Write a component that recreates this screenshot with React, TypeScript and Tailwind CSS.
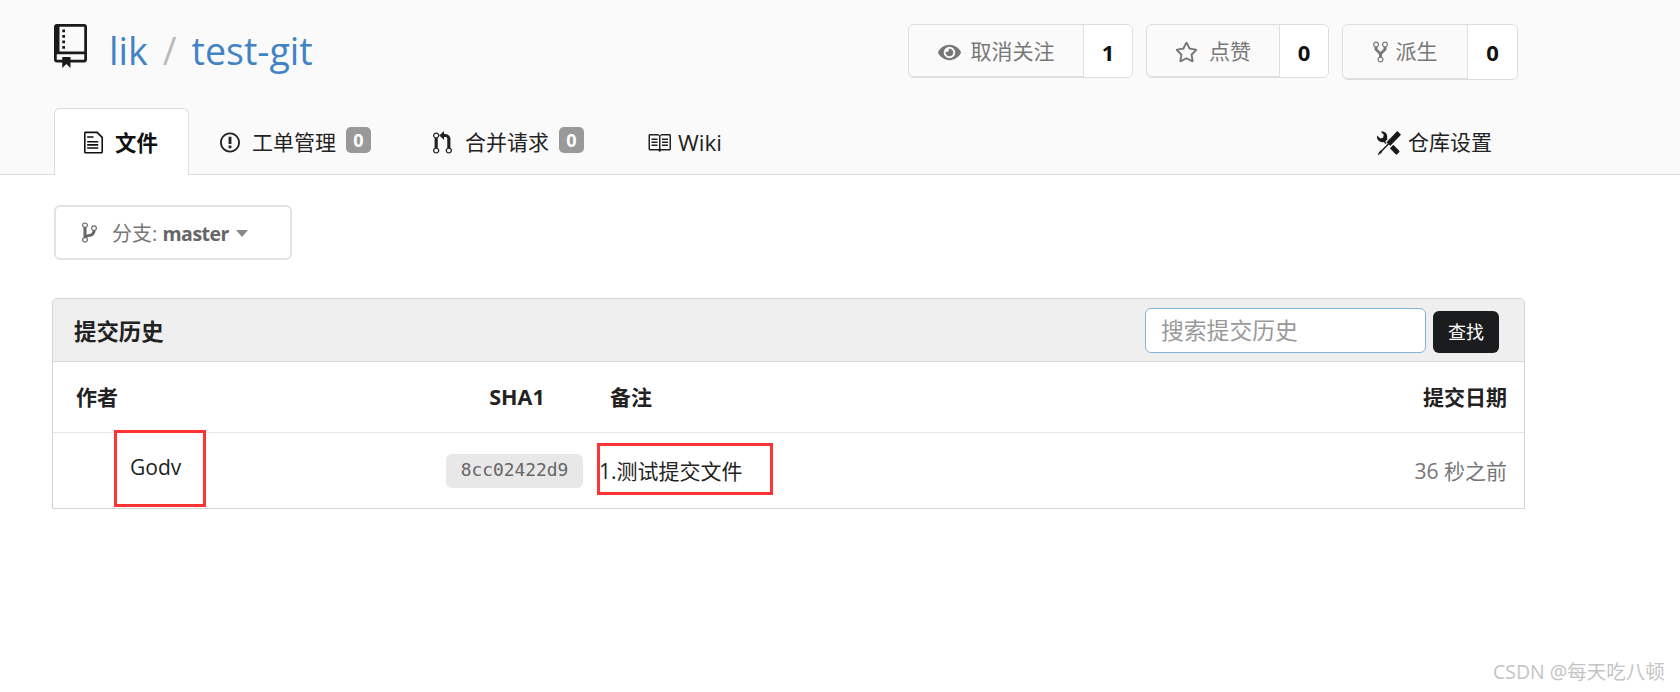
import { FaEye, FaRegStar } from "react-icons/fa";

const P = {
  repo: "M4 9H3V8h1v1zm0-3H3v1h1V6zm0-2H3v1h1V4zm0-2H3v1h1V2zm8-1v12c0 .55-.45 1-1 1H6v2l-1.5-1.5L3 16v-2H1c-.55 0-1-.45-1-1V1c0-.55.45-1 1-1h10c.55 0 1 .45 1 1zm-1 10H1v2h2v-1h3v1h5v-2zm0-10H2v9h9V1z",
  file: "M6 5H2V4h4v1zM2 8h7V7H2v1zm0 2h7V9H2v1zm0 2h7v-1H2v1zm10-7.5V14c0 .55-.45 1-1 1H1c-.55 0-1-.45-1-1V2c0-.55.45-1 1-1h7.5L12 4.5zM11 5L8 2H1v12h10V5z",
  issue: "M7 2.3c3.14 0 5.7 2.56 5.7 5.7s-2.56 5.7-5.7 5.7A5.71 5.71 0 0 1 1.3 8c0-3.14 2.56-5.7 5.7-5.7zM7 1C3.14 1 0 4.14 0 8s3.14 7 7 7 7-3.14 7-7-3.14-7-7-7zm1 3H6v5h2V4zm0 6H6v2h2v-2z",
  pr: "M11 11.28V5c-.03-.78-.34-1.47-.94-2.06C9.46 2.35 8.78 2.03 8 2H7V0L4 3l3 3V4h1c.27.02.48.11.69.31.21.2.3.42.31.69v6.28A1.993 1.993 0 0 0 10 15a1.993 1.993 0 0 0 1-3.72zm-1 2.92c-.66 0-1.2-.55-1.2-1.2 0-.65.55-1.2 1.2-1.2.65 0 1.2.55 1.2 1.2 0 .65-.55 1.2-1.2 1.2zM4 3c0-1.11-.89-2-2-2a1.993 1.993 0 0 0-1 3.72v6.56A1.993 1.993 0 0 0 2 15a1.993 1.993 0 0 0 1-3.72V4.72c.59-.34 1-.98 1-1.72zm-.8 10c0 .66-.55 1.2-1.2 1.2-.65 0-1.2-.55-1.2-1.2 0-.65.55-1.2 1.2-1.2.65 0 1.2.55 1.2 1.2zM2 4.2C1.34 4.2.8 3.65.8 3c0-.65.55-1.2 1.2-1.2.65 0 1.2.55 1.2 1.2 0 .65-.55 1.2-1.2 1.2z",
  book: "M3 5h4v1H3V5zm0 3h4V7H3v1zm0 2h4V9H3v1zm11-5h-4v1h4V5zm0 2h-4v1h4V7zm0 2h-4v1h4V9zm2-6v9c0 .55-.45 1-1 1H9.5l-1 1-1-1H2c-.55 0-1-.45-1-1V3c0-.55.45-1 1-1h5.5l1 1 1-1H15c.55 0 1 .45 1 1zm-8 .5L7.5 3H2v9h6V3.5zm7-.5H9.5l-.5.5V12h6V3z",
  branch: "M10 5c0-1.11-.89-2-2-2a1.993 1.993 0 0 0-1 3.72v.3c-.02.52-.23.98-.63 1.38-.4.4-.86.61-1.38.63-.83.02-1.48.16-2 .45V4.72a1.993 1.993 0 0 0-1-3.72C.88 1 0 1.89 0 3a2 2 0 0 0 1 1.72v6.56c-.59.35-1 .99-1 1.72 0 1.11.89 2 2 2 1.11 0 2-.89 2-2 0-.53-.2-1-.53-1.36.09-.06.48-.41.59-.47.25-.11.56-.17.94-.17 1.05-.05 1.95-.45 2.75-1.25S8.95 7.77 9 6.73h-.02C9.59 6.37 10 5.73 10 5zM2 1.8c.66 0 1.2.55 1.2 1.2 0 .65-.55 1.2-1.2 1.2C1.35 4.2.8 3.65.8 3c0-.65.55-1.2 1.2-1.2zm0 12.41c-.66 0-1.2-.55-1.2-1.2 0-.65.55-1.2 1.2-1.2.65 0 1.2.55 1.2 1.2 0 .65-.55 1.2-1.2 1.2zm6-8c-.66 0-1.2-.55-1.2-1.2 0-.65.55-1.2 1.2-1.2.65 0 1.2.55 1.2 1.2 0 .65-.55 1.2-1.2 1.2z",
  fork: "M8 1a1.993 1.993 0 0 0-1 3.72V6L5 8 3 6V4.72A1.993 1.993 0 0 0 2 1a1.993 1.993 0 0 0-1 3.72V6.5l3 3v1.78A1.993 1.993 0 0 0 5 15a1.993 1.993 0 0 0 1-3.72V9.5l3-3V4.72A1.993 1.993 0 0 0 8 1zM2 4.2C1.34 4.2.8 3.65.8 3c0-.65.55-1.2 1.2-1.2.65 0 1.2.55 1.2 1.2 0 .65-.55 1.2-1.2 1.2zm3 10c-.66 0-1.2-.55-1.2-1.2 0-.65.55-1.2 1.2-1.2.65 0 1.2.55 1.2 1.2 0 .65-.55 1.2-1.2 1.2zm3-10c-.66 0-1.2-.55-1.2-1.2 0-.65.55-1.2 1.2-1.2.65 0 1.2.55 1.2 1.2 0 .65-.55 1.2-1.2 1.2z",
  tools: "M4.48 7.27c.26.26 1.28 1.33 1.28 1.33l.56-.58-.88-.91 1.69-1.8s-.76-.74-.43-.45c.32-1.19.03-2.53-.87-3.48-.89-.93-2.15-1.23-3.24-.89l1.93 2-.51 1.96-1.89.52-1.93-2C-.19 4.17.1 5.48 1 6.4c.94.98 2.29 1.26 3.48.87zm6.44 1.94l-2.33 2.3 3.84 3.98c.12.14.3.2.48.2.19 0 .36-.07.48-.2l1.4-1.4c.26-.27.26-.71 0-.98l-3.87-3.9zM16 2.53L13.55 0 6.33 7.46l.88.91-4.31 4.46-.99.53-1.39 2.27.35.37 2.2-1.44.51-1.02L7.9 9.08l.88.91L16 2.53z",
};

function Oct({ d, vw, vh = 16, className }: { d: string; vw: number; vh?: number; className: string }) {
  return (
    <svg viewBox={`0 0 ${vw} ${vh}`} className={className} fill="currentColor" preserveAspectRatio="none">
      <path fillRule="evenodd" d={d} />
    </svg>
  );
}

function Badge() {
  return (
    <span className="flex h-[26px] w-[25px] items-center justify-center rounded-[5px] bg-[#999] text-[18px] font-bold leading-none text-white">
      0
    </span>
  );
}

function Action({ icon, label, count, left, right, gap, tall }: { icon: React.ReactNode; label: string; count: string; left: string; right: string; gap: string; tall?: boolean }) {
  return (
    <div className={`flex rounded-[6px] border border-[#ddd] ${tall ? "h-[56px]" : "h-[54px]"}`}>
      <div className={`flex items-center justify-center rounded-l-[5px] border-r border-b border-[#e0e0e0] bg-[#fafafa] text-[21px] text-[#777] ${tall ? "pt-[1px]" : "pt-[3px]"} ${left} ${gap}`}>
        {icon}
        <span>{label}</span>
      </div>
      <div className={`flex items-center justify-center rounded-r-[5px] bg-white text-[22px] font-bold text-[#111] ${tall ? "pt-0" : "pt-[2px]"} ${right}`}>{count}</div>
    </div>
  );
}

export default function App() {
  return (
    <div className="relative h-[692px] w-[1680px] overflow-hidden bg-white font-['Open_Sans','Noto_Sans_CJK_SC',sans-serif] text-[21px] text-[#222]">
      <header className="flex h-[175px] w-full flex-col border-b border-[#ddd] bg-[#fafafa] pl-[54px] pt-[24px]">
        <div className="flex w-[1464px] items-start justify-between">
          <div className="flex items-start">
            <Oct d={P.repo} vw={12} className="h-[44px] w-[33px] text-[#1a1a1a]" />
            <div className="ml-[22px] flex h-[54px] items-center text-[37.6px] leading-none text-[#4183c4]">
              <span>lik</span>
              <span className="mx-[15px] text-[#bbb]">/</span>
              <span>test-git</span>
            </div>
          </div>
          <div className="flex items-start gap-[13px]">
            <Action icon={<FaEye className="h-[21px] w-[23px] text-[#777]" />} label="取消关注" count="1" left="w-[175px]" right="w-[48px]" gap="gap-[10px]" />
            <Action icon={<FaRegStar className="h-[22px] w-[23px] text-[#777]" />} label="点赞" count="0" left="w-[133px]" right="w-[48px]" gap="gap-[11px]" />
            <Action icon={<Oct d={P.fork} vw={10} className="h-[24px] w-[15px] text-[#777]" />} label="派生" count="0" left="w-[125px]" right="w-[49px]" gap="gap-[8px]" tall />
          </div>
        </div>

        <nav className="mb-[-1px] mt-auto flex h-[67px] w-[1470px] items-center">
          <div className="flex h-[67px] w-[135px] items-center gap-[12px] self-stretch rounded-t-[6px] border border-b-0 border-[#ddd] bg-white pl-[29px] pt-[2px] font-bold text-[#111]">
            <Oct d={P.file} vw={12} className="h-[25px] w-[19px] -translate-y-[1px]" />
            <span className="text-[21.4px]">文件</span>
          </div>
          <div className="flex items-center pl-[31px] pt-[2px]">
            <Oct d={P.issue} vw={14} className="h-[23px] w-[20px]" />
            <span className="ml-[12px]">工单管理</span>
            <span className="ml-[10px] -translate-y-[3px]"><Badge /></span>
          </div>
          <div className="flex items-center pl-[62px] pt-[2px]">
            <Oct d={P.pr} vw={12} className="h-[24px] w-[19px]" />
            <span className="ml-[13px]">合并请求</span>
            <span className="ml-[10px] -translate-y-[3px]"><Badge /></span>
          </div>
          <div className="flex items-center pl-[63px] pt-[2px]">
            <Oct d={P.book} vw={16} className="h-[24px] w-[24px]" />
            <span className="ml-[7px] text-[22.5px]">Wiki</span>
          </div>
          <div className="ml-auto flex items-center gap-[7px] pr-[32px] pt-[2px]">
            <Oct d={P.tools} vw={16} className="h-[24px] w-[24px] text-[#1a1a1a]" />
            <span>仓库设置</span>
          </div>
        </nav>
      </header>

      <main className="pl-[54px] pt-[30px]">
        <div className="flex h-[55px] w-[238px] items-center rounded-[6px] border-2 border-[#e2e2e2] pl-[26px] pt-[2px] text-[#777]">
          <Oct d={P.branch} vw={10} className="h-[23px] w-[15px] -translate-y-[1px] text-[#666]" />
          <span className="ml-[15px] text-[20px]">分支: <b className="text-[19.5px] font-bold tracking-[-0.5px] text-[#666]">master</b></span>
          <svg viewBox="0 0 12 7" className="ml-[7px] h-[7px] w-[12px] text-[#888]" fill="currentColor"><path d="M0 0h12L6 7z" /></svg>
        </div>

        <section className="relative -ml-[2px] mt-[38px] w-[1473px] rounded-t-[5px] border border-[#d4d4d4]">
          <div className="flex h-[63px] items-start justify-between rounded-t-[5px] border-b border-[#d8d8d8] bg-[#efefef] pl-[21px] pr-[25px]">
            <span className="mt-[16px] text-[22.4px] font-bold text-[#222]">提交历史</span>
            <div className="flex items-start gap-[7px] pt-[9px]">
              <div className="flex h-[45px] w-[281px] items-center rounded-[6px] border border-[#7fb5d6] bg-white pl-[15px] pt-[1px] text-[22.8px] text-[#999]">搜索提交历史</div>
              <button className="mt-[3px] h-[42px] w-[66px] rounded-[6px] bg-[#1b1c1d] text-[18px] text-white">查找</button>
            </div>
          </div>

          <div className="grid h-[71px] grid-cols-[393px_137px_1fr_auto] items-center border-b border-[#e6e6e6] pr-[17px] pt-[1px] font-bold text-[#222]">
            <span className="pl-[23px]">作者</span>
            <span className="pl-[5px] text-center text-[21.5px]">SHA1</span>
            <span className="pl-[27px]">备注</span>
            <span>提交日期</span>
          </div>

          <div className="grid h-[75px] grid-cols-[393px_137px_1fr_auto] items-center pr-[17px]">
            <span className="-translate-y-[3px] pl-[77px]">Godv</span>
            <span className="flex h-[34px] items-center justify-center rounded-[6px] bg-[#e8e8e8] font-['DejaVu_Sans_Mono',monospace] text-[17.9px] text-[#666]">8cc02422d9</span>
            <span className="translate-y-[1px] pl-[16px]">1.测试提交文件</span>
            <span className="translate-y-[1px] text-[#777]">36 秒之前</span>
          </div>

          <div className="absolute left-[61px] top-[131px] h-[77px] w-[92px] border-[3px] border-[#f33]" />
          <div className="absolute left-[544px] top-[144px] h-[52px] w-[176px] border-[3px] border-[#f33]" />
        </section>
      </main>

      <div className="absolute left-[1493px] top-[659px] text-[19.5px] leading-[26px] text-[#c4c4c4]">CSDN @每天吃八顿</div>
    </div>
  );
}
